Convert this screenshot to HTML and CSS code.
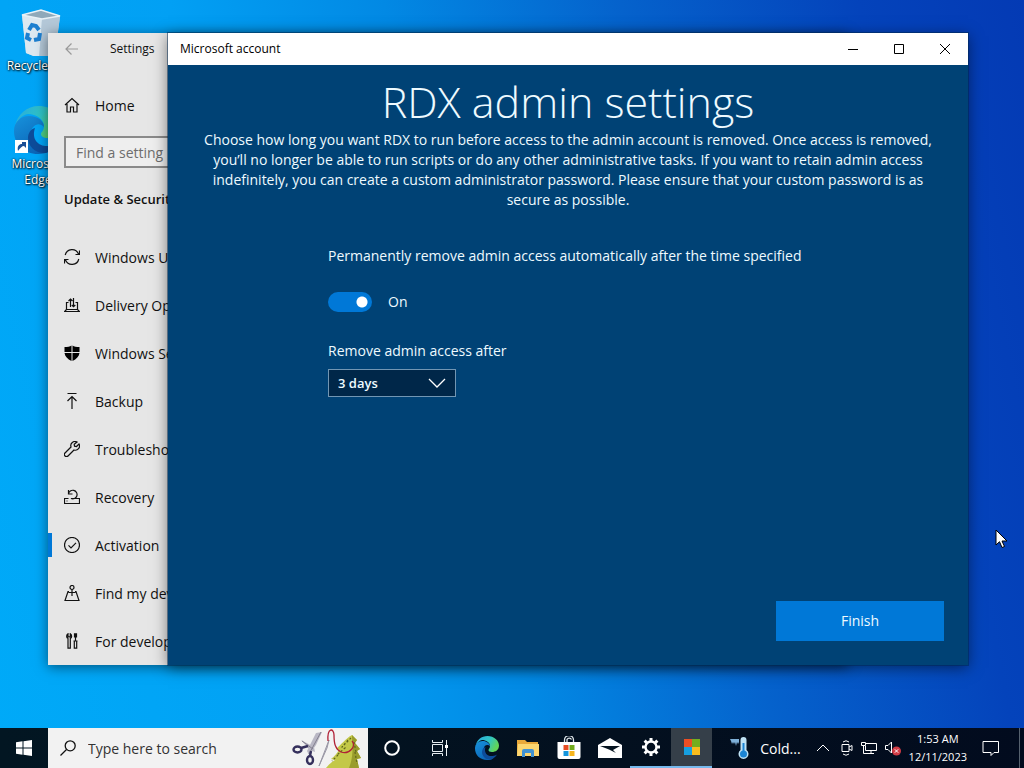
FILE: index.html
```html
<!DOCTYPE html>
<html lang="en">

<head>

	<meta charset="utf-8">
	<title>RDX admin settings</title>

	<link rel="stylesheet" href="styles.css">
</head>

<body>

	<main class="desktop">

		<!-- Desktop shortcuts -->
		<div class="shortcuts">
			<a class="shortcut" href="#">
				<svg width="48" height="48" viewBox="0 0 48 48">
					<path d="M8 7L27 2L46 8L41 47L24 50L12 45Z" fill="#c9dbe8"/>
					<path d="M8 7L28 11L25 50L12 45Z" fill="#dce8f0"/>
					<path d="M28 11L46 8L41 47L25 50Z" fill="#b4c8d8"/>
					<path d="M8 7L27 2L46 8L28 11Z" fill="#8fa9ba" stroke="#e8f1f6" stroke-width="1.5"/>
					<g fill="none" stroke="#1c7fd0" stroke-width="4">
						<path d="M15 22l3-5 4 1 3 4"/>
						<path d="M26 25l-1 6-5 1"/>
						<path d="M17 32l-4-2 1-5"/>
					</g>
				</svg>
				<span>Recycle Bin</span>
			</a>
			<a class="shortcut" href="#">
				<svg width="48" height="48" viewBox="0 0 48 48">
					<use href="#edge"/>
					<rect x="1" y="34" width="13" height="13" fill="#fff"/>
					<path d="M4 45c-1-5 1-7 4-7v-2h-2h6v6l-2-2c-2 0-4 2-6 5z" fill="#1b4f96"/>
				</svg>
				<span>Microsoft Edge</span>
			</a>
		</div>

		<!-- Settings window -->
		<section class="window settings">
			<header class="settings-bar">
				<button class="back" aria-label="Back">
					<svg class="icon" viewBox="0 0 16 16"><path d="M14 8H2.500M7.500 2.500L2 8l5.500 5.500"/></svg>
				</button>
				<span>Settings</span>
			</header>
			<a class="item" href="#">
				<svg class="icon" viewBox="0 0 16 16"><path d="M1 8L8 1.500 15 8M3 7v8h3.500v-5h3v5H13V7"/></svg>
				Home
			</a>
			<input class="find" type="search" placeholder="Find a setting" aria-label="Find a setting">
			<h2>Update &amp; Security</h2>
			<nav>
				<a class="item" href="#">
					<svg class="icon" viewBox="0 0 16 16"><path d="M1.200 6A7 7 0 0 1 14.500 5M15.500 1.500v4h-4M14.800 10A7 7 0 0 1 1.500 11M.5 14.500v-4h4"/></svg>
					Windows Update
				</a>
				<a class="item" href="#">
					<svg class="icon" viewBox="0 0 16 16"><path d="M4.500 5.500h-2v7h11v-7h-2M2.500 12.500l-2 2h15l-2-2M6.500 10V2M4.500 4l2-2 2 2M9.500 1v8.500M7.800 8l1.700 1.700L11.300 8"/></svg>
					Delivery Optimization
				</a>
				<a class="item" href="#">
					<svg class="icon" viewBox="0 0 16 16"><path class="solid" d="M8.500 .5C10 1.600 12.500 2 15.500 2v5h-7zM7.500 .5V7H.5V2C3.500 2 6 1.600 7.500 .5zM.5 8h7v8C3.500 14 1 11.500 .5 8zM8.500 8h7c-.5 3.500-3 6-7 8z"/></svg>
					Windows Security
				</a>
				<a class="item" href="#">
					<svg class="icon" viewBox="0 0 16 16"><path d="M3.500 .5h9M8 16V4M3.500 8L8 3.500 12.500 8"/></svg>
					Backup
				</a>
				<a class="item" href="#">
					<svg class="icon" viewBox="0 0 16 16"><path d="M13 1a4.200 4.200 0 0 0-6 5L1 12a1.900 1.900 0 0 0 3 3l6-6a4.200 4.200 0 0 0 5-6l-2.500 2.500-2-.3-.3-2z"/></svg>
					Troubleshoot
				</a>
				<a class="item" href="#">
					<svg class="icon" viewBox="0 0 16 16"><path d="M4.500 9.500h-4v5h15v-5h-4M2.500 12h1M4.500 1v4h4M4.500 5A4.300 4.300 0 1 1 7 9.500h4.500"/></svg>
					Recovery
				</a>
				<a class="item current" href="#">
					<svg class="icon" viewBox="0 0 16 16"><circle cx="8" cy="8" r="7.500"/><path d="M4.500 8.300L7 10.800l5-5"/></svg>
					Activation
				</a>
				<a class="item" href="#">
					<svg class="icon" viewBox="0 0 16 16"><circle cx="8" cy="2.500" r="2"/><path d="M8 4.500V11M5 6.500H4l-3 9h14l-3-9h-1M4.500 7.500H8h3.500"/></svg>
					Find my device
				</a>
				<a class="item" href="#">
					<svg class="icon" viewBox="0 0 16 16"><path d="M4 .8C2.200 2 2.200 4.500 4 5.500v9.700h2.300V5.500c1.800-1 1.800-3.500 0-4.700v3H4zM11.500 1v7M10.500 .8h2v3h-2zM9.500 8h4M10.300 8.500v6.700h2.400V8.500"/></svg>
					For developers
				</a>
			</nav>
		</section>

		<!-- Microsoft account dialog -->
		<section class="window account">
			<header class="title-bar">
				<span class="title">Microsoft account</span>
				<button aria-label="Minimize"><svg width="10" height="10"><path d="M0 5.500h10"/></svg></button>
				<button aria-label="Maximize"><svg width="10" height="10"><path d="M.5 .5h9v9h-9z"/></svg></button>
				<button aria-label="Close"><svg width="10" height="10"><path d="M0 0l10 10M10 0L0 10"/></svg></button>
			</header>
			<div class="content">
				<h1>RDX admin settings</h1>
				<p>Choose how long you want RDX to run before access to the admin account is removed. Once access is removed, you’ll no longer be able to run scripts or do any other administrative tasks. If you want to retain admin access indefinitely, you can create a custom administrator password. Please ensure that your custom password is as secure as possible.</p>
				<form class="options">
					<label for="autoRemove">Permanently remove admin access automatically after the time specified</label>
					<div class="switch">
						<input type="checkbox" role="switch" id="autoRemove" checked>
						<span>On</span>
					</div>
					<label for="removeAfter">Remove admin access after</label>
					<div class="select">
						<select id="removeAfter">
							<option>3 days</option>
						</select>
						<svg width="18" height="10" viewBox="0 0 18 10"><path d="M1 1l8 8 8-8"/></svg>
					</div>
				</form>
				<button class="finish">Finish</button>
			</div>
		</section>

		<svg class="cursor" width="13" height="20" viewBox="0 0 13 20"><path d="M1 1v15l3.500-3.300L7 18.500l2.500-1L7 12h5z"/></svg>

	</main>

	<footer class="taskbar">
		<button class="start" aria-label="Start">
			<svg width="16" height="16" viewBox="0 0 16 16" fill="#fff"><path d="M0 2.300L6.500 1.300V7.500H0zM7.500 1.200L16 0v7.500H7.500zM0 8.500h6.500v6.200L0 13.700zM7.500 8.500H16V16l-8.500-1.200z"/></svg>
		</button>
		<div class="search">
			<svg width="16" height="16" viewBox="0 0 16 16" fill="none" stroke="#111" stroke-width="1.300"><circle cx="10.200" cy="5.800" r="5"/><path d="M6.500 9.500L.5 15.500"/></svg>
			<input type="text" placeholder="Type here to search" aria-label="Type here to search">
			<svg width="76" height="40" viewBox="0 0 76 40">
				<path d="M60 7l5 5-2 3 5 6-3 2 4 7-4 1 2 9H34c3-4 6-6 9-8l-4-1c4-3 6-6 8-9l-3-1c5-4 10-11 16-14z" fill="#c3c848"/>
				<path d="M60 7l5 5-2 3 5 6-3 2 4 7-4 1 2 9H57c4-10 4-20 3-31z" fill="#999c2c"/>
				<path d="M59 10l-9 9M62 14l2 10M46 27l-6 6M56 12l-6 7 3 1-8 7M63 24l2 12" fill="none" stroke="#5f651c" stroke-width="1.200" stroke-dasharray="2 2"/>
				<path d="M24 5L30 4 24 17 17 27 15 23zM9 12l13 7 1 5-5-2z" fill="#b9b7c4"/>
				<path d="M29 4L17 26M10 13l11 8" stroke="#83808f"/>
				<g fill="none" stroke="#35305c" stroke-width="2.400"><ellipse cx="5.500" cy="21.500" rx="4" ry="3"/><ellipse cx="18" cy="32" rx="3" ry="4"/><path d="M9 20l7-2M18 28l1-5"/></g>
				<path d="M37 12L27 38l8-18z" fill="#d9d9df" stroke="#9896a4"/>
				<path d="M36 13c-1-14 6-13 6-6 0 8 1 14 7 17 8 3 16-6 11-11" fill="none" stroke="#b02036" stroke-width="1.300"/>
			</svg>
		</div>
		<button class="tool" aria-label="Cortana">
			<svg width="16" height="16" viewBox="0 0 16 16" fill="none" stroke="#fff" stroke-width="2"><circle cx="8" cy="8" r="6.800"/></svg>
		</button>
		<button class="tool" aria-label="Task view">
			<svg width="18" height="16" viewBox="0 0 18 16" fill="none" stroke="#e8eef2"><path d="M1.500 4.500h10v7h-10zM1.500 0v2.500h10V0M1.500 16v-2.500h10V16M15.500 0v16"/><path d="M14 5h3v3h-3z" fill="#fff" stroke="none"/></svg>
		</button>
		<div class="apps">
			<button aria-label="Microsoft Edge">
				<svg width="24" height="24" viewBox="0 0 48 48">
					<defs>
						<linearGradient id="edgeTop" x1="0" y1="0" x2="1" y2="0.400">
							<stop offset="0" stop-color="#29a8e0"/>
							<stop offset="0.600" stop-color="#30c5c4"/>
							<stop offset="1" stop-color="#62d558"/>
						</linearGradient>
						<linearGradient id="edgeLeft" x1="0" y1="0" x2="0.600" y2="1">
							<stop offset="0" stop-color="#1792dc"/>
							<stop offset="1" stop-color="#0b64b6"/>
						</linearGradient>
					</defs>
					<g id="edge">
						<path d="M1 21C3 8 13 0 25 0c13 0 23 9 23 19 0 9-7 13-14 13-5 0-7-2-7-4s3-3 3-8c0-7-8-12-16-12C8 9 3 14 1 21z" fill="url(#edgeTop)"/>
						<path d="M0 25c0-9 7-15 15-15 9 0 15 5 15 11-5-6-13-2-13 7 0 10 8 17 19 17-3 2-7 3-12 3C10 48 0 38 0 25z" fill="url(#edgeLeft)"/>
						<path d="M21 22c-4 12 4 19 14 18 4 0 7-2 9-3-3 5-7 8-12 10-11 1-18-7-18-15 0-5 3-9 7-10z" fill="#0d4c9a"/>
					</g>
				</svg>
			</button>
			<button aria-label="File Explorer">
				<svg width="22" height="20" viewBox="0 0 22 20"><path d="M0 2h8l2 2h11v14H0z" fill="#e9a93a"/><path d="M1 6h21v12H0z" fill="#fcd670"/><path d="M5 19v-6q0-2 2-2h8q2 0 2 2v6h-3v-4H8v4z" fill="#4092d2"/></svg>
			</button>
			<button aria-label="Microsoft Store">
				<svg width="24" height="24" viewBox="0 0 24 24"><path d="M7.500 7V4a3 3 0 0 1 9 0v3M10 6V3.500a2.500 2.500 0 0 1 4.500 0" fill="none" stroke="#dfe6ea" stroke-width="1.300"/><path d="M.5 6h23v15q0 2-2 2h-19q-2 0-2-2z" fill="#fff"/><path d="M6.500 9h5v5h-5z" fill="#e74c22"/><path d="M12.500 9h5v5h-5z" fill="#72ab1c"/><path d="M6.500 15h5v5h-5z" fill="#1595dd"/><path d="M12.500 15h5v5h-5z" fill="#f7b51c"/></svg>
			</button>
			<button aria-label="Mail">
				<svg width="24" height="20" viewBox="0 0 24 20"><path d="M12 0l12 7v13H0V7z" fill="#fff"/><path d="M2 8h20l-7 4 3 3-7-3.500z" fill="#061420"/></svg>
			</button>
			<button class="running" aria-label="Settings">
				<svg width="20" height="20" viewBox="0 0 20 20" fill="none" stroke="#fff"><circle cx="10" cy="10" r="5.500" stroke-width="2.400"/><path d="M10 1v3M10 16v3M1 10h3M16 10h3M3.600 3.600l2.200 2.200M14.200 14.200l2.200 2.200M16.400 3.600l-2.200 2.200M5.800 14.200l-2.200 2.200" stroke-width="3"/></svg>
			</button>
			<button class="running active" aria-label="Microsoft account">
				<svg width="16" height="16" viewBox="0 0 16 16"><path d="M0 0h8v8H0z" fill="#ec4e24"/><path d="M8 0h8v8H8z" fill="#74ae1e"/><path d="M0 8h8v8H0z" fill="#169fe0"/><path d="M8 8h8v8H8z" fill="#f9bc1d"/></svg>
			</button>
		</div>
		<div class="tray">
			<button class="weather">
				<svg width="20" height="24" viewBox="0 0 20 24"><path d="M0 3h9v3l-1 2-1-2-1 4-1-4-1 2-1-2-1 2-1-3z" fill="#7fb0d8"/><path d="M10.500 4a3 3 0 0 1 6 0v10a5 5 0 1 1-6 0z" fill="#bfe2f5"/><circle cx="13.500" cy="18" r="3.500" fill="#1b84d4"/><path d="M12.500 7h2v11h-2z" fill="#1b84d4"/></svg>
				Cold...
			</button>
			<button class="more" aria-label="Show hidden icons"><svg width="12" height="16" viewBox="0 0 12 16"><path d="M0 11l6-6 6 6"/></svg></button>
			<button aria-label="Meet Now"><svg width="12" height="16" viewBox="0 0 12 16"><path d="M1 4.500h7v7H1zM8 7l3-1.500v5L8 9M2 2q3-2.500 6 0M2 14q3 2.500 6 0"/></svg></button>
			<button aria-label="Network"><svg width="16" height="16" viewBox="0 0 16 16"><path d="M5 3.500h10.500v7h-11V6M.5 2.500h4v3h-4zM2.500 5.500v8h6M10 10.500v3M7 13.500h6"/></svg></button>
			<button aria-label="Volume muted"><svg width="16" height="16" viewBox="0 0 16 16"><path d="M.5 5.500h2.500l3.500-3.500v11L3 9.500H.5z"/><circle cx="11.500" cy="11" r="4.500" fill="#d13b45" stroke="none"/><path d="M9.800 9.300l3.400 3.400M13.200 9.300l-3.400 3.400"/></svg></button>
			<button class="clock"><time>1:53 AM</time><time>12/11/2023</time></button>
			<button class="notes" aria-label="Notifications"><svg width="18" height="18" viewBox="0 0 18 18"><path d="M1 2.500h15.500v11H12L9 16.500v-3H1z"/></svg></button>
		</div>
	</footer>

</body>

</html>
```
FILE: styles.css
```css
* {
	box-sizing: border-box;
}

html, body {
	height: 100%;
	margin: 0;
}

body {
	display: flex;
	flex-direction: column;
	overflow: hidden;
	font-family: 'Open Sans', 'Noto Sans', sans-serif;
	font-size: 14px;
	color: #111;
	background: linear-gradient(78deg, #00aaf8 0%, #02a0f4 28%, #0289e4 46%, #0562cc 66%, #0443bb 86%, #043ab4 100%);
}

button, input, select {
	font: inherit;
	color: inherit;
	border: 0;
	border-radius: 0;
	padding: 0;
	background: none;
}

a {
	color: inherit;
	text-decoration: none;
}

svg {
	flex: none;
	display: block;
}

.desktop {
	flex: 1;
	position: relative;
}

/* Shortcuts */
.shortcuts {
	display: flex;
	flex-direction: column;
	gap: 32px;
	width: 76px;
	padding-top: 8px;
}
.shortcut {
	display: flex;
	flex-direction: column;
	align-items: center;
	gap: 2px;
	color: #fff;
	font-size: 12px;
	line-height: 16px;
	text-align: center;
	text-shadow: 1px 1px 2px #000, 0 0 2px #000;
}

/* Windows */
.window {
	position: absolute;
	top: 33px;
	bottom: 63px;
	display: flex;
	flex-direction: column;
}

.settings {
	left: 48px;
	right: 176px;
	background: #e6e6e6;
	box-shadow: 0 2px 12px rgba(0, 0, 0, .5);
}
.settings-bar {
	display: flex;
	align-items: center;
	gap: 30px;
	height: 32px;
	padding-left: 16px;
	font-size: 12px;
	margin-bottom: 17px;
}
.back {
	color: #999;
}
.icon {
	width: 16px;
	height: 16px;
	fill: none;
	stroke: currentColor;
	stroke-width: 1.2;
}
.icon .solid {
	fill: #000;
	stroke: none;
}
.item {
	display: flex;
	align-items: center;
	gap: 15px;
	height: 48px;
	padding-left: 16px;
	white-space: nowrap;
}
.current {
	background: linear-gradient(#0078d7, #0078d7) left center / 4px 24px no-repeat;
}
.find {
	height: 32px;
	margin: 7px 16px 0;
	padding: 0 10px;
	border: 2px solid #8a8a8a;
	background: #eee;
}
.find::placeholder {
	color: #6d6d6d;
}
.settings h2 {
	margin: 21px 16px 24px;
	font-size: 13px;
	font-weight: 600;
	line-height: 20px;
}

.account {
	left: 168px;
	right: 56px;
	background: #004275;
	color: #eefaff;
	box-shadow: 0 0 0 1px rgba(0, 40, 80, .5), 0 3px 14px rgba(0, 0, 0, .5);
}
.title-bar {
	display: flex;
	height: 32px;
	background: #fff;
	color: #000;
	font-size: 12px;
	line-height: 32px;
}
.title {
	flex: 1;
	padding-left: 12px;
}
.title-bar button {
	display: flex;
	align-items: center;
	justify-content: center;
	width: 46px;
}
.title-bar svg {
	fill: none;
	stroke: #000;
}
.content {
	flex: 1;
	display: flex;
	flex-direction: column;
	padding: 9px 24px 24px;
	line-height: 20px;
}
.content h1 {
	margin: 0;
	font-size: 43px;
	font-weight: 300;
	line-height: 56px;
	text-align: center;
}
.content p {
	margin: 0;
	text-align: center;
}

.options {
	display: flex;
	flex-direction: column;
	align-items: flex-start;
	padding: 36px 0 0 136px;
}
.switch {
	display: flex;
	align-items: center;
	gap: 16px;
	margin: 26px 0 29px;
}
.switch input {
	appearance: none;
	width: 44px;
	height: 20px;
	margin: 0;
	border-radius: 10px;
	background: #5b7f9c;
}
.switch input:checked {
	background: radial-gradient(circle at 34px 10px, #fff 5px, #0078d7 6px);
}
.select {
	display: grid;
	align-items: center;
	margin-top: 8px;
	width: 128px;
}
.select > * {
	grid-area: 1 / 1;
}
.select select {
	appearance: none;
	height: 28px;
	padding: 0 9px;
	border: 1px solid #7296b3;
	background: #002749;
	font-size: 13px;
	font-weight: 600;
}
.select svg {
	justify-self: end;
	margin-right: 10px;
	fill: none;
	stroke: #fff;
	stroke-width: 1.3;
	pointer-events: none;
}
.finish {
	align-self: flex-end;
	width: 168px;
	height: 40px;
	margin-top: auto;
	background: #0078d7;
}

.cursor {
	position: absolute;
	left: 995px;
	top: 529px;
	fill: #fff;
	stroke: #000;
}

/* Taskbar */
.taskbar {
	display: flex;
	height: 40px;
	background: linear-gradient(90deg, #021622, #03101f 60%, #020b1e);
	color: #fff;
}
.taskbar button {
	display: flex;
	align-items: center;
	justify-content: center;
}
.taskbar .start,
.taskbar .tool {
	width: 48px;
}
.search {
	display: flex;
	align-items: center;
	gap: 12px;
	width: 320px;
	padding-left: 12px;
	background: #f2f2f2;
	color: #333;
}
.search input {
	flex: 1;
	min-width: 0;
}
.search input::placeholder {
	color: #333;
}
.apps {
	display: flex;
	padding-left: 2px;
}
.apps button {
	width: 41px;
}
.apps .running {
	border-bottom: 2px solid #76b9ed;
}
.apps .active {
	background: #353f49;
}
.tray {
	display: flex;
	gap: 8px;
	margin-left: auto;
	padding-right: 12px;
	border-right: 1px solid #56616e;
	margin-right: 4px;
}
.tray svg {
	fill: none;
	stroke: #fff;
}
.tray .weather svg {
	stroke: none;
}
.tray .weather {
	gap: 10px;
	margin-right: 8px;
}
.tray .more {
	margin-right: 4px;
}
.taskbar .clock {
	flex-direction: column;
	font-size: 11px;
	line-height: 18px;
}
.taskbar .notes {
	width: 32px;
}
```
